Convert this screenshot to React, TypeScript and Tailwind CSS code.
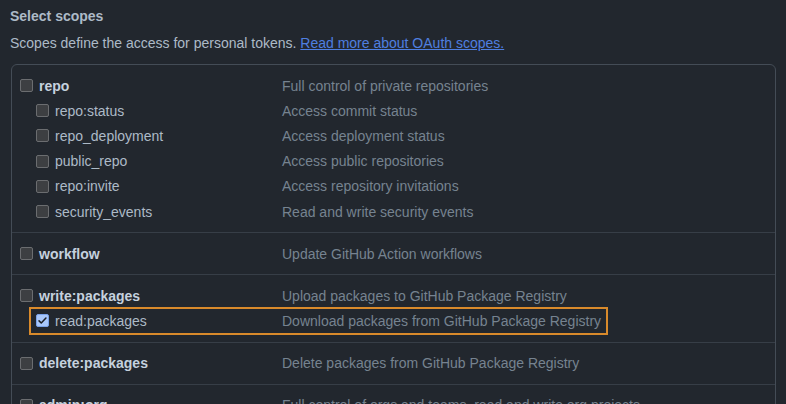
import React from "react";

type Scope = { name: string; desc: string; checked?: boolean; highlight?: boolean };
type Group = { main: Scope; subs: Scope[] };

const groups: Group[] = [
  {
    main: { name: "repo", desc: "Full control of private repositories" },
    subs: [
      { name: "repo:status", desc: "Access commit status" },
      { name: "repo_deployment", desc: "Access deployment status" },
      { name: "public_repo", desc: "Access public repositories" },
      { name: "repo:invite", desc: "Access repository invitations" },
      { name: "security_events", desc: "Read and write security events" },
    ],
  },
  { main: { name: "workflow", desc: "Update GitHub Action workflows" }, subs: [] },
  {
    main: { name: "write:packages", desc: "Upload packages to GitHub Package Registry" },
    subs: [
      {
        name: "read:packages",
        desc: "Download packages from GitHub Package Registry",
        checked: true,
        highlight: true,
      },
    ],
  },
  { main: { name: "delete:packages", desc: "Delete packages from GitHub Package Registry" }, subs: [] },
  {
    main: { name: "admin:org", desc: "Full control of orgs and teams, read and write org projects" },
    subs: [],
  },
];

function Checkbox({ checked }: { checked?: boolean }) {
  if (checked) {
    return (
      <span className="flex h-[13px] w-[13px] shrink-0 items-center justify-center rounded-[2px] border border-[#7aa2e8] bg-[#a8c7fa]">
        <svg width="11" height="11" viewBox="0 0 16 16">
          <path d="M3 8.5l3.2 3.2L13 4.5" fill="none" stroke="#1b1f24" strokeWidth="2.2" strokeLinecap="round" strokeLinejoin="round" />
        </svg>
      </span>
    );
  }
  return (
    <span className="block h-[13px] w-[13px] shrink-0 rounded-[2px] border border-[#6b6d70] bg-[#3d3f42]" />
  );
}

function Row({ scope, sub }: { scope: Scope; sub?: boolean }) {
  return (
    <div className={`relative flex items-center pl-[8px] ${sub ? "h-[25.25px]" : "h-[25px]"}`}>
      <div className={`flex w-[262px] shrink-0 items-center gap-[6px] ${sub ? "pl-[16px]" : ""}`}>
        <Checkbox checked={scope.checked} />
        <span className={sub ? "text-[#adbac7]" : "font-bold text-[#c5d1de]"}>{scope.name}</span>
      </div>
      <span className="whitespace-nowrap text-[#768390]">{scope.desc}</span>
      {scope.highlight && (
        <span className="pointer-events-none absolute left-[17px] top-[-1px] h-[28px] w-[579px] border-2 border-[#d98a2b]" />
      )}
    </div>
  );
}

export default function App() {
  return (
    <div className="h-[404px] overflow-hidden bg-[#22272e] pl-[10px] pr-[10px] pt-[6px] font-['Liberation_Sans',Arial,sans-serif] text-[14px] leading-[20px]">
      <h3 className="font-bold text-[#adbac7]">Select scopes</h3>
      <p className="mt-[7px] text-[#adbac7]">
        Scopes define the access for personal tokens.{" "}
        <a className="text-[#4f7fe0] underline">Read more about OAuth scopes.</a>
      </p>
      <div className="ml-[1px] mt-[11px] rounded-[6px] border border-[#444c56]">
        {groups.map((g, i) => (
          <div key={i} className={`py-[8px] ${i > 0 ? "border-t border-[#373e47]" : ""}`}>
            <Row scope={g.main} />
            {g.subs.map((s) => (
              <Row key={s.name} scope={s} sub />
            ))}
          </div>
        ))}
      </div>
    </div>
  );
}
